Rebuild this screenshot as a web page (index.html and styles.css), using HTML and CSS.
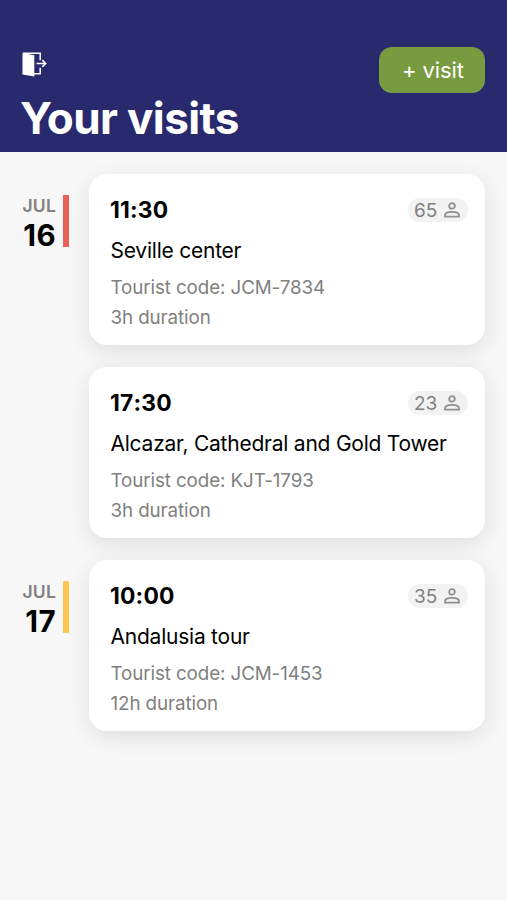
FILE: index.html
```html
<!DOCTYPE html>
<html lang="en">
<head>
    <meta charset="UTF-8">
    <meta name="viewport" content="width=device-width, initial-scale=1.0">
    <title>Your visits</title>
    <link rel="stylesheet" href="styles.css">
</head>
<body>
    <svg width="0" height="0" class="icon-defs">
        <symbol id="person" viewBox="0 0 16 16">
            <circle cx="8" cy="3.9" r="2.8"/>
            <path d="M1 14.6v-1.4C1 11.2 4 9.8 8 9.8s7 1.4 7 3.4v1.4z"/>
        </symbol>
    </svg>
    <header>
        <div class="header-left">
            <a href="#" class="logout" aria-label="Log out">
                <svg width="26" height="26" viewBox="0 0 26 26">
                    <path class="door" d="M.5 1l11.8 2.2v21.3L.5 22.6z"/>
                    <path class="frame" d="M1 1.2h17.2v7M12 21.8h6.2v-6M14.5 11.5h9M20.3 8.1l3.4 3.4-3.4 3.4"/>
                </svg>
            </a>
            <h1>Your visits</h1>
        </div>
        <button class="add-button">+ visit</button>
    </header>
    <main>
        <section class="day">
            <div class="date red">
                <span class="month">JUL</span>
                <span class="number">16</span>
            </div>
            <div class="visits">
                <article class="card">
                    <div class="card-top">
                        <h2>11:30</h2>
                        <span class="people">65 <svg width="16" height="16"><use href="#person"/></svg></span>
                    </div>
                    <p class="place">Seville center</p>
                    <p class="info">Tourist code: JCM-7834</p>
                    <p class="info">3h duration</p>
                </article>
                <article class="card">
                    <div class="card-top">
                        <h2>17:30</h2>
                        <span class="people">23 <svg width="16" height="16"><use href="#person"/></svg></span>
                    </div>
                    <p class="place">Alcazar, Cathedral and Gold Tower</p>
                    <p class="info">Tourist code: KJT-1793</p>
                    <p class="info">3h duration</p>
                </article>
            </div>
        </section>
        <section class="day">
            <div class="date yellow">
                <span class="month">JUL</span>
                <span class="number">17</span>
            </div>
            <div class="visits">
                <article class="card">
                    <div class="card-top">
                        <h2>10:00</h2>
                        <span class="people">35 <svg width="16" height="16"><use href="#person"/></svg></span>
                    </div>
                    <p class="place">Andalusia tour</p>
                    <p class="info">Tourist code: JCM-1453</p>
                    <p class="info">12h duration</p>
                </article>
            </div>
        </section>
    </main>
</body>
</html>
```
FILE: styles.css
```css
* {
    box-sizing: border-box;
}
body {
    margin: 0;
    min-height: 100vh;
    background-color: #f7f7f7;
    color: #000000;
    font-family: Inter, sans-serif;
}
h1, h2, p {
    margin: 0;
}
.icon-defs {
    display: none;
}
header {
    display: flex;
    justify-content: space-between;
    align-items: flex-start;
    height: 152px;
    padding: 47px 22px 0 20px;
    background-color: #29296e;
    color: #ffffff;
}
.header-left {
    padding-top: 5px;
}
.logout {
    display: block;
    height: 26px;
    margin-left: 2px;
}
.logout svg {
    display: block;
}
.door {
    fill: #ffffff;
}
.frame {
    fill: none;
    stroke: #ffffff;
    stroke-width: 1.5;
}
header h1 {
    margin-top: 15px;
    font-size: 44px;
    line-height: 50px;
    font-weight: 700;
    letter-spacing: -0.6px;
    white-space: nowrap;
}
.add-button {
    width: 106px;
    height: 46px;
    padding: 0 0 0 2px;
    border: none;
    border-radius: 13px;
    background-color: #799b40;
    color: #ffffff;
    font-family: inherit;
    font-size: 22px;
    letter-spacing: -0.1px;
    cursor: pointer;
}
main {
    padding: 22px 22px 0 22px;
}
.day {
    display: flex;
    gap: 20px;
    margin-bottom: 22px;
}
.date {
    display: flex;
    flex-direction: column;
    width: 47px;
    height: 52px;
    margin-top: 21px;
    padding-right: 7px;
    border-right: 6px solid;
    text-align: right;
}
.date.red {
    border-color: #e96159;
}
.date.yellow {
    border-color: #fec553;
}
.month {
    font-size: 17.5px;
    line-height: 22px;
    font-weight: 600;
    letter-spacing: 0.2px;
    color: #808080;
}
.number {
    font-size: 29.5px;
    line-height: 36px;
    font-weight: 700;
    font-kerning: none;
    letter-spacing: 0.4px;
    color: #000000;
}
.visits {
    display: flex;
    flex: 1;
    flex-direction: column;
    gap: 22px;
}
.card {
    height: 171px;
    padding: 20px 17px 0 21px;
    border-radius: 18px;
    background-color: #ffffff;
    box-shadow: 0 6px 22px rgba(0, 0, 0, 0.1);
}
.card-top {
    display: flex;
    justify-content: space-between;
    align-items: center;
    height: 31px;
}
.card h2 {
    font-size: 22.8px;
    line-height: 30px;
    font-weight: 700;
    font-kerning: none;
    letter-spacing: 0.2px;
}
.people {
    display: flex;
    justify-content: space-between;
    align-items: center;
    width: 60px;
    height: 24px;
    padding: 1px 8px 0 6px;
    border-radius: 12px;
    background-color: #f2f2f2;
    color: #808080;
    font-size: 19px;
}
.people svg {
    fill: none;
    stroke: #909090;
    stroke-width: 1.8;
}
.place {
    margin-top: 11px;
    padding-left: 0.5px;
    font-size: 21px;
    line-height: 30px;
    letter-spacing: -0.23px;
    white-space: nowrap;
}
.place + .info {
    margin-top: 7px;
}
.info {
    padding-left: 0.5px;
    font-size: 18.8px;
    line-height: 30px;
    letter-spacing: -0.1px;
    color: #808080;
}
```
